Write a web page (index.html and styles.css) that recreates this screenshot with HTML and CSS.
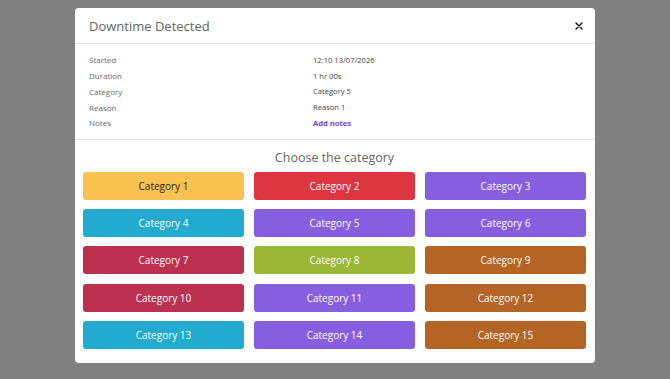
FILE: index.html
```html
<!DOCTYPE html>
<html lang="en">
<head>
    <meta charset="UTF-8">
    <meta name="viewport" content="width=device-width, initial-scale=1.0">
    <title>Downtime Detected</title>
    <link rel="stylesheet" href="styles.css">
</head>
<body>

    <!-- Modal -->
    <div class="modal">
        <div class="modal-header">
            <h2>Downtime Detected</h2>
            <span class="close">
                <svg width="8" height="8" viewBox="0 0 8 8"><path d="M1 1L7 7M7 1L1 7" stroke="#111" stroke-width="1.4" stroke-linecap="round"/></svg>
            </span>
        </div>

        <div class="details">
            <div class="row"><span class="label">Started</span><span class="value">12:10 13/07/2026</span></div>
            <div class="row"><span class="label">Duration</span><span class="value">1 hr 00s</span></div>
            <div class="row"><span class="label">Category</span><span class="value">Category 5</span></div>
            <div class="row"><span class="label">Reason</span><span class="value">Reason 1</span></div>
            <div class="row"><span class="label">Notes</span><a class="value link" href="#">Add notes</a></div>
        </div>

        <div class="chooser">
            <h3>Choose the category</h3>
            <div class="grid">
                <button class="cat yellow">Category 1</button>
                <button class="cat red">Category 2</button>
                <button class="cat purple">Category 3</button>
                <button class="cat cyan">Category 4</button>
                <button class="cat purple">Category 5</button>
                <button class="cat purple">Category 6</button>
                <button class="cat crimson">Category 7</button>
                <button class="cat green">Category 8</button>
                <button class="cat brown">Category 9</button>
                <button class="cat crimson">Category 10</button>
                <button class="cat purple">Category 11</button>
                <button class="cat brown">Category 12</button>
                <button class="cat cyan">Category 13</button>
                <button class="cat purple">Category 14</button>
                <button class="cat brown">Category 15</button>
            </div>
        </div>
    </div>

</body>
</html>
```

FILE: styles.css
```css
/* General Reset */
body {
    margin: 0;
    font-family: "Open Sans", Arial, sans-serif;
    background-color: #808080;
    color: #4A4A4A;
}
.modal {
    width: 520px;
    margin: 8px auto 0;
    background-color: white;
    border-radius: 4px;
    padding-bottom: 6px;
}
.modal-header {
    display: flex;
    justify-content: space-between;
    align-items: center;
    height: 35px;
    padding: 0 12px 0 14px;
    border-bottom: 1px solid #dee2e6;
}
.modal-header h2 {
    margin: 0;
    font-size: 13px;
    font-weight: 500;
    color: #666;
}
.close {
    display: flex;
    cursor: pointer;
}
.details {
    padding: 8px 14px 8px;
    border-bottom: 1px solid #dee2e6;
}
.row {
    display: flex;
    height: 15.75px;
    align-items: center;
    font-size: 8px;
}
.label {
    width: 224px;
    color: #666;
    font-weight: 500;
}
.value {
    color: #444;
    font-size: 7.6px;
}
.link {
    color: #7b3fe4;
    font-weight: bold;
    text-decoration: none;
}
.chooser {
    padding: 0 9px 8px 8px;
}
.chooser h3 {
    margin: 0;
    padding: 9px 0 6px;
    text-align: center;
    font-size: 12.5px;
    font-weight: 500;
    color: #666;
}
.grid {
    display: grid;
    grid-template-columns: repeat(3, 1fr);
    gap: 9.3px 10px;
}
.cat {
    height: 28px;
    border: none;
    border-radius: 3px;
    font-family: inherit;
    font-size: 10px;
    color: white;
    cursor: pointer;
}
.yellow { background-color: #fbc252; color: #222; }
.red { background-color: #dc3640; }
.purple { background-color: #865fe0; }
.cyan { background-color: #22aacf; }
.crimson { background-color: #bc3150; }
.green { background-color: #9bb735; }
.brown { background-color: #b46424; }
```
